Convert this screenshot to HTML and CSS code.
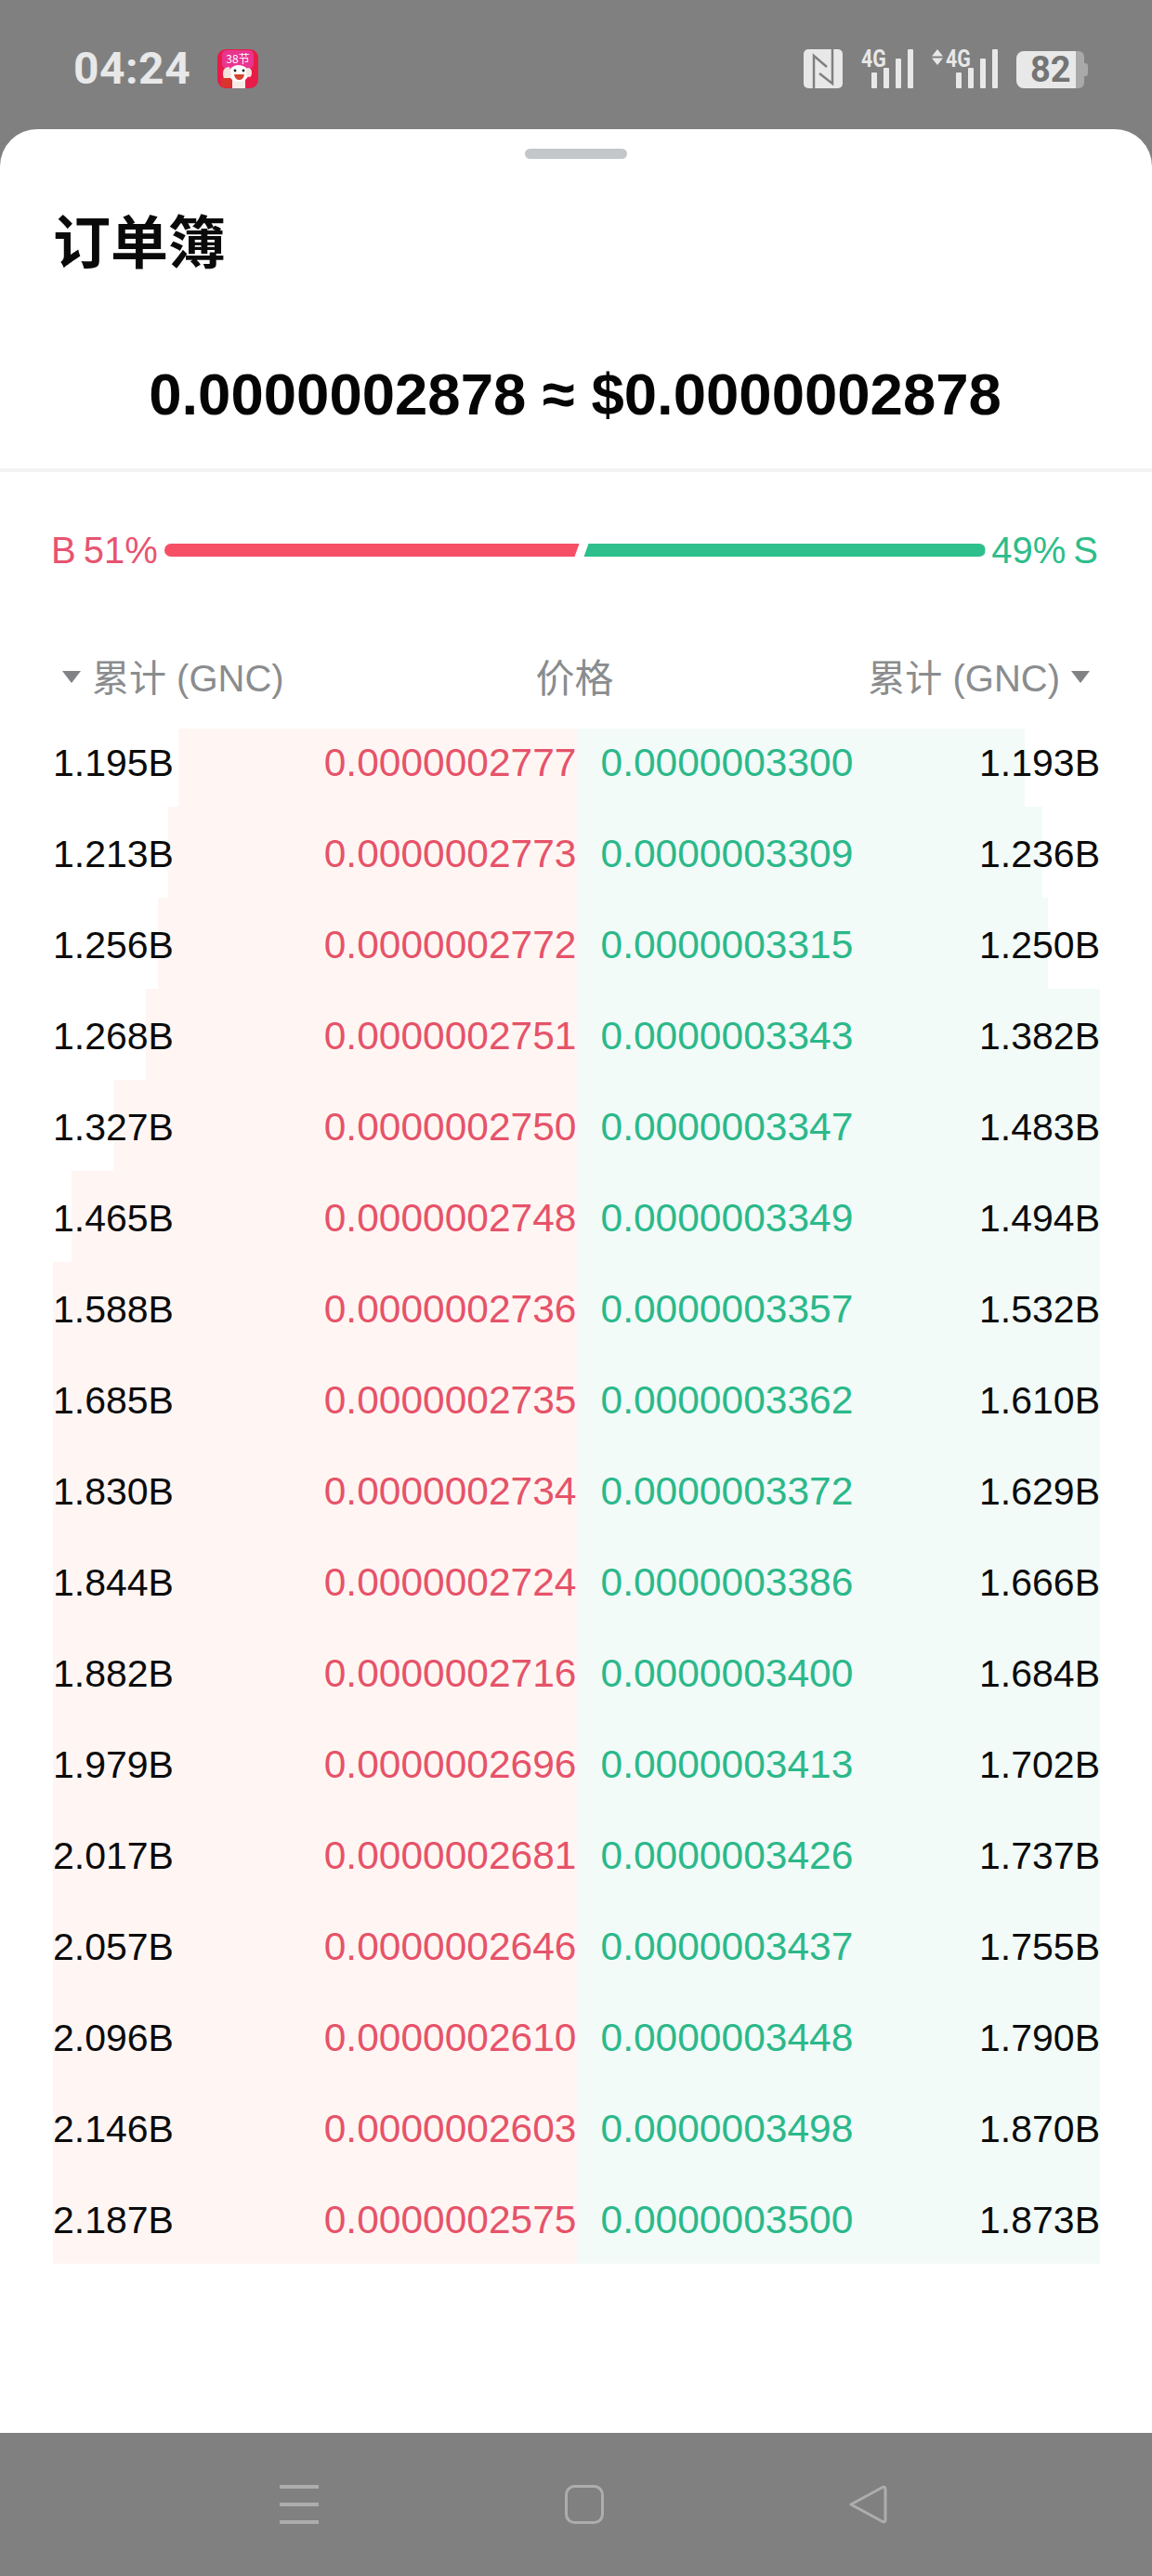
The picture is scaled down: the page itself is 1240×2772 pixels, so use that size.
FILE: index.html
```html
<!DOCTYPE html>
<html lang="zh-CN">
<head>
  <meta charset="UTF-8">
  <title>订单簿</title>
  <meta name="viewport" content="width=device-width, initial-scale=1.0">
  <link rel="stylesheet" href="styles.css">
</head>
<body>

  <div class="status-bar">
    <div class="status-left">
      <span class="clock">04:24</span>
      <svg class="app-icon" width="44" height="42" viewBox="0 0 44 42">
        <rect width="44" height="42" rx="9" fill="#e81c48"/>
        <rect x="5" y="1" width="34" height="20" rx="5" fill="#e9358f"/>
        <text x="22" y="15" font-size="12" fill="#fff" text-anchor="middle" font-family="'Noto Sans CJK SC', sans-serif">38节</text>
        <path d="M16 32h14v10h-14z" fill="#f6ece6"/>
        <ellipse cx="23" cy="26" rx="11" ry="9" fill="#fff"/>
        <path d="M13 19q-7 0-7 7t4 7q4-1 5-6z" fill="#f3e3da"/>
        <path d="M32 20q5 0 5 5t-3 5q-3-1-3-5z" fill="#f3e3da"/>
        <path d="M18 27h11q-1 6-5.500 6t-5.500-6z" fill="#d8452f"/>
        <circle cx="19" cy="23" r="1.400" fill="#222"/>
        <circle cx="28" cy="23" r="1.400" fill="#222"/>
        <rect x="4" y="31" width="11" height="10" rx="2" fill="#d8352c"/>
      </svg>
    </div>
    <div class="status-right">
      <svg class="nfc" width="42" height="42" viewBox="0 0 42 42">
        <rect width="42" height="42" rx="5" fill="#e8e8e8"/>
        <path d="M11 42V7l14 12" fill="none" stroke="#808080" stroke-width="2.500"/>
        <path d="M17 26l14 11V0" fill="none" stroke="#808080" stroke-width="2.500"/>
      </svg>
      <div class="signal">
        <span class="net">4G</span>
        <div class="bars"><i class="b1"></i><i class="b2"></i><i class="b3"></i><i class="b4"></i></div>
      </div>
      <div class="signal signal-data">
        <svg class="updown" width="12" height="17" viewBox="0 0 12 17"><path d="M6 0l6 7.500h-12zM6 17l-6-7.500h12z" fill="#e8e8e8"/></svg>
        <span class="net">4G</span>
        <div class="bars"><i class="b1"></i><i class="b2"></i><i class="b3"></i><i class="b4"></i></div>
      </div>
      <div class="battery"><span class="level">82</span><span class="rest"></span><span class="tip"></span></div>
    </div>
  </div>

  <div class="sheet">
    <div class="handle"></div>
    <h2 class="sheet-title">订单簿</h2>
    <div class="last-price">0.0000002878 ≈ $0.0000002878</div>

    <div class="ratio">
      <span class="ratio-buy">B 51%</span>
      <div class="ratio-track">
        <div class="track-buy"></div>
        <div class="track-sell"></div>
      </div>
      <span class="ratio-sell">49% S</span>
    </div>

    <div class="book-head">
      <div class="head-left"><span class="caret"></span>累计 (GNC)</div>
      <div class="head-mid">价格</div>
      <div class="head-right">累计 (GNC)<span class="caret"></span></div>
    </div>

    <div class="book" id="book"></div>
  </div>

  <div class="nav-bar">
    <svg width="42" height="42" viewBox="0 0 42 42"><path d="M0 2h42M0 21h42M0 40h42" stroke="#adadad" stroke-width="4"/></svg>
    <svg width="42" height="42" viewBox="0 0 42 42"><rect x="1.500" y="1.500" width="39" height="39" rx="9" fill="none" stroke="#adadad" stroke-width="3"/></svg>
    <svg width="42" height="42" viewBox="0 0 42 42"><path d="M2 21L36 2.500q3-1 3 2v33q0 3-3 2z" fill="none" stroke="#adadad" stroke-width="3" stroke-linejoin="round"/></svg>
  </div>

  <script src="book.js"></script>
</body>
</html>
```

FILE: styles.css
```css
* { margin: 0; padding: 0; box-sizing: border-box; }
body {
  width: 1240px;
  height: 2772px;
  background: #808080;
  font-family: "Liberation Sans", "Noto Sans CJK SC", sans-serif;
  display: flex;
  flex-direction: column;
  overflow: hidden;
}
.status-bar {
  height: 139px;
  padding: 53px 69px 0 79px;
  display: flex;
  justify-content: space-between;
  align-items: flex-start;
  color: #e8e8e8;
}
.status-left {
  display: flex;
  align-items: center;
  gap: 27px;
}
.clock {
  width: 128px;
  font-family: Roboto, sans-serif;
  font-size: 48px;
  font-weight: 700;
  line-height: 42px;
  letter-spacing: 0.5px;
}
.app-icon { display: block; }
.status-right {
  display: flex;
  align-items: flex-start;
  gap: 20px;
}
.nfc { display: block; }
.signal {
  position: relative;
  width: 56px;
  height: 42px;
}
.signal-data { width: 71px; }
.net {
  position: absolute;
  left: 0;
  top: -1px;
  font-family: Roboto, sans-serif;
  font-size: 26px;
  line-height: 22px;
  font-weight: 700;
  transform: scaleX(0.82);
  transform-origin: left top;
}
.signal-data .net { left: 15px; }
.updown {
  position: absolute;
  left: 0;
  top: 0;
}
.bars {
  position: absolute;
  right: 0;
  bottom: 0;
  display: flex;
  align-items: flex-end;
  gap: 7px;
}
.bars i {
  display: block;
  width: 6px;
  background: #e8e8e8;
  border-radius: 1px;
}
.bars .b1 { height: 17px; }
.bars .b2 { height: 22px; }
.bars .b3 { height: 32px; }
.bars .b4 { height: 42px; }
.battery {
  display: flex;
  align-items: center;
  height: 40px;
  margin-top: 2px;
  color: #747474;
}
.level {
  width: 64px;
  height: 40px;
  padding-left: 15px;
  background: #e8e8e8;
  border-radius: 8px 0 0 8px;
  font-family: Roboto, sans-serif;
  font-size: 38px;
  font-weight: 700;
  line-height: 40px;
}
.rest {
  width: 9px;
  height: 40px;
  background: #a9a9a9;
  border-radius: 0 6px 6px 0;
}
.tip {
  width: 4px;
  height: 14px;
  background: #a9a9a9;
  border-radius: 0 3px 3px 0;
}
.sheet {
  height: 2479px;
  background: white;
  border-radius: 40px 40px 0 0;
  padding-top: 21px;
}
.handle {
  width: 110px;
  height: 11px;
  margin: 0 auto;
  background: #c4c7ca;
  border-radius: 6px;
}
.sheet-title {
  margin: 62px 0 0 57px;
  height: 60px;
  font-size: 62px;
  line-height: 60px;
  font-weight: 700;
  color: #0a0a0a;
}
.last-price {
  margin-top: 97px;
  height: 118px;
  padding-right: 2px;
  text-align: center;
  font-size: 63.500px;
  line-height: 68px;
  font-weight: 700;
  color: #050505;
  border-bottom: 4px solid #f3f3f3;
}
.ratio {
  margin-top: 69px;
  height: 30px;
  padding: 0 58px 0 55px;
  display: flex;
  align-items: center;
  justify-content: space-between;
  font-size: 40px;
  word-spacing: -3px;
}
.ratio-buy { color: #e75470; }
.ratio-sell { color: #2dbd8a; }
.ratio-track {
  width: 884px;
  height: 14px;
  display: flex;
}
.track-buy {
  width: 447px;
  background: #f64f66;
  border-radius: 7px 0 0 7px;
  clip-path: polygon(0 0, 100% 0, calc(100% - 5px) 100%, 0 100%);
}
.track-sell {
  width: 432px;
  margin-left: 5px;
  background: #2ec08c;
  border-radius: 0 7px 7px 0;
  clip-path: polygon(5px 0, 100% 0, 100% 100%, 0 100%);
}
.book-head {
  margin-top: 98px;
  padding: 0 67px;
  height: 44px;
  display: flex;
  justify-content: space-between;
  align-items: center;
  font-size: 40px;
  color: #8a8c8e;
}
.head-left, .head-right {
  display: flex;
  align-items: center;
  gap: 12px;
  width: 300px;
}
.head-right { justify-content: flex-end; }
.head-mid {
  font-size: 42px;
  padding-right: 3px;
  margin-top: -2px;
}
.caret {
  width: 0;
  height: 0;
  border-left: 10px solid transparent;
  border-right: 10px solid transparent;
  border-top: 13px solid #808285;
  margin-top: 2px;
}
.book {
  margin: 21px 56px 0 57px;
}
.row {
  position: relative;
  height: 98px;
  display: flex;
  font-size: 42.500px;
  line-height: 44px;
  padding-top: 29px;
}
.depth-buy, .depth-sell {
  position: absolute;
  top: 0;
  bottom: 0;
}
.row:first-child .depth-buy, .row:first-child .depth-sell { top: 14px; }
.depth-buy {
  right: 50%;
  background: #fff6f4;
}
.depth-sell {
  left: 50%;
  background: #f2fbf8;
}
.row span { position: relative; }
.total-buy, .total-sell {
  width: 200px;
  font-size: 41px;
  color: #0b0b0b;
}
.total-sell { text-align: right; }
.price-buy {
  width: 363.500px;
  text-align: right;
  color: #e65369;
}
.price-sell {
  width: 363.500px;
  padding-left: 26px;
  color: #2cb88a;
}
.nav-bar {
  flex: 1;
  padding: 56px 284px 0 301px;
  display: flex;
  justify-content: space-between;
  align-items: flex-start;
}
```

FILE: book.js
```js
// [total, price, depth %] for each side of the book
const bids = [
  ['1.195B', '0.0000002777', 76], ['1.213B', '0.0000002773', 78], ['1.256B', '0.0000002772', 80],
  ['1.268B', '0.0000002751', 82.300], ['1.327B', '0.0000002750', 88.500], ['1.465B', '0.0000002748', 96.500],
  ['1.588B', '0.0000002736', 100], ['1.685B', '0.0000002735', 100], ['1.830B', '0.0000002734', 100],
  ['1.844B', '0.0000002724', 100], ['1.882B', '0.0000002716', 100], ['1.979B', '0.0000002696', 100],
  ['2.017B', '0.0000002681', 100], ['2.057B', '0.0000002646', 100], ['2.096B', '0.0000002610', 100],
  ['2.146B', '0.0000002603', 100], ['2.187B', '0.0000002575', 100]
];
const asks = [
  ['1.193B', '0.0000003300', 85.600], ['1.236B', '0.0000003309', 89], ['1.250B', '0.0000003315', 90],
  ['1.382B', '0.0000003343', 100], ['1.483B', '0.0000003347', 100], ['1.494B', '0.0000003349', 100],
  ['1.532B', '0.0000003357', 100], ['1.610B', '0.0000003362', 100], ['1.629B', '0.0000003372', 100],
  ['1.666B', '0.0000003386', 100], ['1.684B', '0.0000003400', 100], ['1.702B', '0.0000003413', 100],
  ['1.737B', '0.0000003426', 100], ['1.755B', '0.0000003437', 100], ['1.790B', '0.0000003448', 100],
  ['1.870B', '0.0000003498', 100], ['1.873B', '0.0000003500', 100]
];

const book = document.getElementById('book');
bids.forEach((bid, i) => {
  const ask = asks[i];
  book.innerHTML += `
    <div class="row">
      <div class="depth-buy" style="width:${bid[2] / 2}%"></div>
      <div class="depth-sell" style="width:${ask[2] / 2}%"></div>
      <span class="total-buy">${bid[0]}</span>
      <span class="price-buy">${bid[1]}</span>
      <span class="price-sell">${ask[1]}</span>
      <span class="total-sell">${ask[0]}</span>
    </div>`;
});
```
